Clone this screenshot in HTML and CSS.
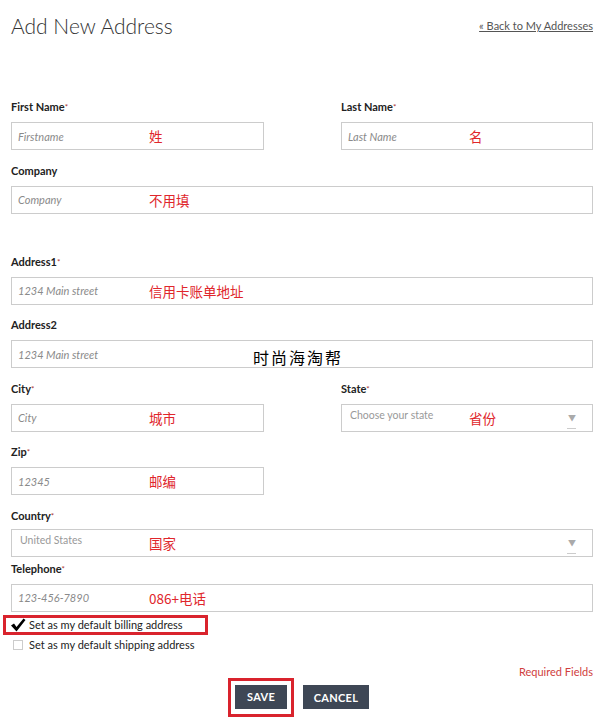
FILE: index.html
```html
<!DOCTYPE html>
<html lang="en">
<head>
  <meta charset="UTF-8">
  <meta name="viewport" content="width=device-width, initial-scale=1.0">
  <title>Add New Address</title>
  <link rel="stylesheet" href="styles.css">
</head>
<body>
  <div class="page">
    <header class="page-head">
      <h1>Add New Address</h1>
      <a href="#" class="back-link">« Back to My Addresses</a>
    </header>

    <form class="address-form">
      <div class="row two-col">
        <div class="field">
          <label>First Name<span class="req">*</span></label>
          <div class="box">
            <input type="text" placeholder="Firstname">
            <span class="note">姓</span>
          </div>
        </div>
        <div class="field">
          <label>Last Name<span class="req">*</span></label>
          <div class="box">
            <input type="text" placeholder="Last Name">
            <span class="note note-right">名</span>
          </div>
        </div>
      </div>

      <div class="field">
        <label>Company</label>
        <div class="box">
          <input type="text" placeholder="Company">
          <span class="note">不用填</span>
        </div>
      </div>

      <div class="field spaced">
        <label>Address1<span class="req">*</span></label>
        <div class="box">
          <input type="text" placeholder="1234 Main street">
          <span class="note">信用卡账单地址</span>
        </div>
      </div>

      <div class="field">
        <label>Address2</label>
        <div class="box">
          <input type="text" placeholder="1234 Main street">
        </div>
      </div>

      <div class="row two-col">
        <div class="field">
          <label>City<span class="req">*</span></label>
          <div class="box">
            <input type="text" placeholder="City">
            <span class="note">城市</span>
          </div>
        </div>
        <div class="field">
          <label>State<span class="req">*</span></label>
          <div class="box select">
            <span class="select-text">Choose your state</span>
            <span class="arrow">▼</span>
            <span class="note note-right">省份</span>
          </div>
        </div>
      </div>

      <div class="row two-col">
        <div class="field">
          <label>Zip<span class="req">*</span></label>
          <div class="box">
            <input type="text" placeholder="12345">
            <span class="note">邮编</span>
          </div>
        </div>
      </div>

      <div class="field country">
        <label>Country<span class="req">*</span></label>
        <div class="box select">
          <span class="select-text">United States</span>
          <span class="arrow">▼</span>
          <span class="note">国家</span>
        </div>
      </div>

      <div class="field phone">
        <label>Telephone<span class="req">*</span></label>
        <div class="box">
          <input type="text" placeholder="123-456-7890">
          <span class="note">086+电话</span>
        </div>
      </div>

      <div class="check-row billing">
        <svg class="tick" width="16" height="14" viewBox="0 0 16 14">
          <path d="M1 7.5 L4 5.5 L6.5 9 L13.5 0.5 L15.5 2 L6.5 13.5 Z" fill="#000"/>
        </svg>
        <span>Set as my default billing address</span>
      </div>
      <div class="check-row">
        <span class="checkbox"></span>
        <span>Set as my default shipping address</span>
      </div>

      <div class="required">Required Fields</div>

      <div class="actions">
        <div class="highlight">
          <button type="button" class="btn">SAVE</button>
        </div>
        <button type="button" class="btn">CANCEL</button>
      </div>
    </form>

    <div class="watermark">时尚海淘帮</div>
  </div>
</body>
</html>
```

FILE: styles.css
```css
body {
  margin: 0;
  padding: 0;
  background-color: #fff;
  font-family: Lato, "Noto Sans CJK SC", sans-serif;
  color: #222;
}

.page {
  position: relative;
  padding: 0 7px 0 11px;
  height: 720px;
  box-sizing: border-box;
  overflow: hidden;
}

.page-head {
  display: flex;
  justify-content: space-between;
  align-items: baseline;
  margin-top: 12px;
}

.page-head h1 {
  margin: 0;
  font-size: 21px;
  line-height: 28px;
  font-weight: 300;
  color: #333;
}

.back-link {
  font-size: 11px;
  color: #555;
  text-decoration: underline;
  position: relative;
  top: -4px;
}

.address-form {
  padding-top: 60px;
}

.row.two-col {
  display: grid;
  grid-template-columns: 253px 1fr;
  column-gap: 77px;
}

.field {
  margin-bottom: 13.5px;
}

.field.spaced {
  margin-top: 41px;
}

.field label {
  display: block;
  font-size: 11px;
  line-height: 14px;
  font-weight: 700;
  margin-bottom: 8px;
  color: #222;
}

.req {
  font-size: 8px;
  vertical-align: top;
  color: #a33;
  font-weight: 400;
}

.box {
  position: relative;
  height: 28px;
  border: 1px solid #ccc;
  box-sizing: border-box;
}

.box input {
  width: 100%;
  height: 100%;
  border: none;
  padding: 0 6px;
  box-sizing: border-box;
  font-family: Lato, sans-serif;
  font-size: 11px;
  background: transparent;
  outline: none;
}

.box input::placeholder {
  font-style: italic;
  color: #8a8a8a;
}

.note {
  position: absolute;
  top: 0;
  bottom: 0;
  left: 137px;
  display: flex;
  align-items: center;
  font-family: "Noto Sans CJK SC", sans-serif;
  font-size: 13.5px;
  color: #e0262c;
  pointer-events: none;
}

.note-right {
  left: 127px;
}

.select .select-text {
  display: block;
  padding: 4px 0 0 8px;
  font-size: 10.5px;
  color: #999;
}

.select .arrow {
  position: absolute;
  right: 16px;
  top: 7px;
  font-size: 8px;
  color: #aaa;
}

.select .arrow::after {
  content: "";
  position: absolute;
  left: -1px;
  top: 16px;
  width: 9px;
  height: 1px;
  background: #ccc;
}

.country {
  margin-bottom: 5px;
}

.country label {
  margin-bottom: 6px;
}

.phone {
  margin-bottom: 3px;
}

.check-row {
  display: flex;
  align-items: center;
  gap: 6px;
  font-size: 11px;
  height: 20px;
  margin-left: 2px;
}

.check-row.billing {
  width: 205px;
  box-sizing: border-box;
  border: 3px solid #d9232d;
  margin-left: -8px;
  padding-left: 4px;
  gap: 3px;
}

.tick {
  flex-shrink: 0;
}

.checkbox {
  width: 10px;
  height: 10px;
  border: 1px solid #ccc;
  box-sizing: border-box;
}

.required {
  text-align: right;
  font-size: 11px;
  line-height: 13px;
  color: #d04040;
  margin-top: 10px;
}

.actions {
  display: flex;
  justify-content: center;
  align-items: center;
  gap: 9px;
  padding-right: 7px;
}

.highlight {
  border: 3px solid #d9232d;
  padding: 4px 4px 5px;
}

.btn {
  display: block;
  height: 24px;
  padding: 0 10px;
  min-width: 52px;
  border: none;
  background-color: #3e4755;
  color: #fff;
  font-family: Lato, sans-serif;
  font-weight: 700;
  font-size: 11px;
  letter-spacing: 0.3px;
  cursor: pointer;
}

.actions > .btn {
  min-width: 66px;
}

.watermark {
  position: absolute;
  left: 253px;
  top: 345px;
  font-family: "Noto Sans CJK SC", sans-serif;
  font-size: 16px;
  letter-spacing: 2px;
  color: #000;
  text-shadow: 0 0 2px #fff, 0 0 2px #fff;
}
```
